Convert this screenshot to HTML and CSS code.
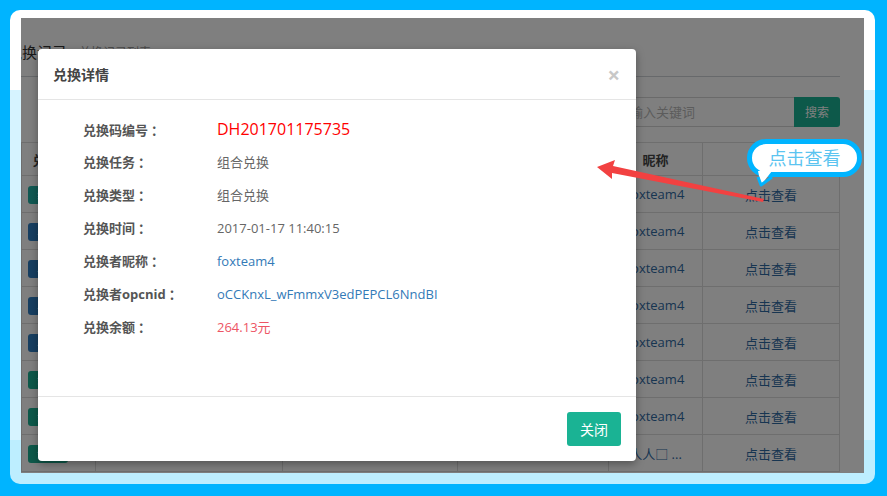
FILE: index.html
```html
<!DOCTYPE html>
<html lang="zh-CN">
<head>
<meta charset="utf-8">
<title>兑换详情</title>
<link rel="stylesheet" href="styles.css">
</head>
<body>
<div class="frame">
  <div class="page">
    <div class="content">
      <div class="title-row">
        <h2 class="title">兑换记录</h2>
        <span class="subtitle">兑换记录列表</span>
      </div>
      <div class="search-row">
        <input class="search-input" type="text" placeholder="请输入关键词">
        <button class="search-btn">搜索</button>
      </div>
      <table class="grid">
        <colgroup>
          <col class="c1"><col class="c2"><col class="c3"><col class="c4"><col class="c5"><col class="c6">
        </colgroup>
        <thead>
          <tr><th>兑换类型</th><th>兑换码编号</th><th>兑换任务</th><th>兑换时间</th><th>昵称</th><th>操作</th></tr>
        </thead>
        <tbody>
          <tr><td class="left"><span class="badge teal">组合</span></td><td>DH201701175735</td><td>组合兑换</td><td>2017-01-17</td><td class="link">foxteam4</td><td class="link">点击查看</td></tr>
          <tr><td class="left"><span class="badge blue">单项</span></td><td>DH201701175734</td><td>单项兑换</td><td>2017-01-17</td><td class="link">foxteam4</td><td class="link">点击查看</td></tr>
          <tr><td class="left"><span class="badge blue">单项</span></td><td>DH201701175733</td><td>单项兑换</td><td>2017-01-17</td><td class="link">foxteam4</td><td class="link">点击查看</td></tr>
          <tr><td class="left"><span class="badge blue">单项</span></td><td>DH201701175732</td><td>单项兑换</td><td>2017-01-17</td><td class="link">foxteam4</td><td class="link">点击查看</td></tr>
          <tr><td class="left"><span class="badge blue">单项</span></td><td>DH201701175731</td><td>单项兑换</td><td>2017-01-17</td><td class="link">foxteam4</td><td class="link">点击查看</td></tr>
          <tr><td class="left"><span class="badge green">余额</span></td><td>DH201701175730</td><td>余额兑换</td><td>2017-01-17</td><td class="link">foxteam4</td><td class="link">点击查看</td></tr>
          <tr><td class="left"><span class="badge green">余额</span></td><td>DH201701175729</td><td>余额兑换</td><td>2017-01-17</td><td class="link">foxteam4</td><td class="link">点击查看</td></tr>
          <tr><td class="left"><span class="badge green">余额</span></td><td>DH201701175728</td><td>余额兑换</td><td>2017-01-16</td><td class="link">人人□ ...</td><td class="link">点击查看</td></tr>
        </tbody>
      </table>
    </div>
    <div class="overlay"></div>
    <div class="modal">
      <div class="modal-header">
        <h4 class="modal-title">兑换详情</h4>
        <span class="close">×</span>
      </div>
      <div class="modal-body">
        <div class="row"><span class="label">兑换码编号<span class="colon">：</span></span><span class="value code">DH201701175735</span></div>
        <div class="row"><span class="label">兑换任务<span class="colon">：</span></span><span class="value">组合兑换</span></div>
        <div class="row"><span class="label">兑换类型<span class="colon">：</span></span><span class="value">组合兑换</span></div>
        <div class="row"><span class="label">兑换时间<span class="colon">：</span></span><span class="value">2017-01-17 11:40:15</span></div>
        <div class="row"><span class="label">兑换者昵称<span class="colon">：</span></span><span class="value blue-text">foxteam4</span></div>
        <div class="row"><span class="label">兑换者opcnid<span class="colon">：</span></span><span class="value blue-text">oCCKnxL_wFmmxV3edPEPCL6NndBI</span></div>
        <div class="row"><span class="label">兑换余额<span class="colon">：</span></span><span class="value money">264.13元</span></div>
      </div>
      <div class="modal-footer">
        <button class="btn-close">关闭</button>
      </div>
    </div>
  </div>
</div>
<div class="bubble">点击查看</div>
<svg class="bubble-tail" width="26" height="24" viewBox="0 0 26 24">
  <polygon points="6,4 20,4 9,18" fill="#ffffff"/>
  <polyline points="6,10 9,18 20,10" fill="none" stroke="#00b4ff" stroke-width="3" stroke-linejoin="round"/>
</svg>
<svg class="arrow" width="887" height="496" viewBox="0 0 887 496">
  <polygon points="597,167 615,160 613,166 764,199 763,202 612,173 612,179" fill="#f24141"/>
</svg>
</body>
</html>
```
FILE: styles.css
```css
* { box-sizing: border-box; }

html, body {
  margin: 0;
  padding: 0;
}

body {
  width: 887px;
  height: 496px;
  overflow: hidden;
  background: #00b4ff;
  font-family: "Open Sans", "Noto Sans CJK SC", sans-serif;
  position: relative;
}

.frame {
  margin: 10px 0 0 10px;
  width: 865px;
  height: 474px;
  padding: 8px 11px 11px 11px;
  border-radius: 10px;
  background: linear-gradient(to bottom, #ffffff 0, #ffffff 80px, #d6f3ff 80px, #d6f3ff 430px, #bdeeff 430px, #bdeeff 100%);
}

.page {
  position: relative;
  width: 843px;
  height: 455px;
  overflow: hidden;
  background: #ffffff;
}

.content {
  width: 819px;
  padding-top: 22px;
}

.title-row {
  display: flex;
  align-items: flex-start;
  gap: 12px;
  height: 37px;
  border-bottom: 1px solid #cfd3d6;
  margin-left: -14px;
}

.title {
  margin: 0;
  font-size: 15px;
  line-height: 24px;
  font-weight: normal;
  color: #333;
}

.subtitle {
  font-size: 12px;
  line-height: 26px;
  color: #999;
}

.search-row {
  display: flex;
  justify-content: flex-end;
  margin-top: 20px;
  height: 30px;
}

.search-input {
  width: 190px;
  height: 30px;
  border: 1px solid #d5d5d5;
  border-right: none;
  padding: 0 12px;
  font-family: inherit;
  font-size: 13px;
  color: #555;
  outline: none;
}

.search-input::placeholder { color: #b8b8b8; }

.search-btn {
  width: 46px;
  height: 30px;
  border: none;
  border-radius: 0 3px 3px 0;
  background: #1ab394;
  color: #ffffff;
  font-family: inherit;
  font-size: 12px;
  padding: 0;
}

.grid {
  margin-top: 15px;
  width: 818px;
  border-collapse: collapse;
  table-layout: fixed;
  font-size: 13px;
}

.c1 { width: 74px; }
.c2 { width: 187px; }
.c3 { width: 175px; }
.c4 { width: 151px; }
.c5 { width: 94px; }
.c6 { width: 137px; }

.grid th, .grid td {
  border: 1px solid #dddddd;
  text-align: center;
  padding: 0 6px;
  white-space: nowrap;
  overflow: hidden;
  color: #666;
}

.grid th {
  height: 33px;
  font-weight: bold;
  color: #444;
}

.grid td { height: 37px; }

.grid .left { text-align: left; }

.grid td.link { color: #2f6aa3; }

.badge {
  display: inline-block;
  width: 40px;
  height: 18px;
  line-height: 18px;
  border-radius: 3px;
  text-align: center;
  color: #ffffff;
  font-size: 11px;
  vertical-align: middle;
}

.badge.teal { background: #23b3a6; }
.badge.blue { background: #2f7ec2; }
.badge.green { background: #1ab394; }

.overlay {
  position: absolute;
  inset: 0;
  background: rgba(0, 0, 0, 0.5);
}

.modal {
  position: absolute;
  left: 17px;
  top: 31px;
  width: 598px;
  height: 412px;
  background: #ffffff;
  border-radius: 4px;
  box-shadow: 0 3px 9px rgba(0, 0, 0, 0.35);
  display: flex;
  flex-direction: column;
}

.modal-header {
  height: 51px;
  padding: 0 16px 0 15px;
  border-bottom: 1px solid #e5e5e5;
  display: flex;
  align-items: center;
  justify-content: space-between;
}

.modal-title {
  margin: 0;
  font-size: 14px;
  font-weight: bold;
  color: #444;
}

.close {
  font-size: 22px;
  line-height: 22px;
  font-weight: bold;
  color: #c8c8c8;
}

.modal-body {
  flex: 1;
  padding: 13px 0 0 45px;
}

.row {
  display: flex;
  align-items: center;
  height: 33px;
}

.row:first-child { height: 32px; }

.label {
  width: 134px;
  font-size: 13px;
  font-weight: bold;
  color: #555;
}

.colon {
  margin-left: 3px;
}

.value {
  font-size: 13px;
  color: #666;
}

.value.code {
  font-size: 16px;
  color: #ff0000;
}

.value.blue-text { color: #337ab7; }
.value.money { color: #ed5565; }

.modal-footer {
  border-top: 1px solid #e5e5e5;
  padding: 15px 15px 15px 0;
  display: flex;
  justify-content: flex-end;
}

.btn-close {
  width: 54px;
  height: 34px;
  border: none;
  border-radius: 3px;
  background: #1ab394;
  color: #ffffff;
  font-family: inherit;
  font-size: 14px;
  padding: 0;
}

.bubble {
  position: absolute;
  left: 747px;
  top: 139px;
  width: 115px;
  height: 38px;
  border: 5px solid #00b4ff;
  border-radius: 19px;
  background: #ffffff;
  color: #5bc4f0;
  font-size: 18px;
  line-height: 28px;
  text-align: center;
}

.bubble-tail {
  position: absolute;
  left: 752px;
  top: 167px;
}

.arrow {
  position: absolute;
  left: 0;
  top: 0;
  pointer-events: none;
}
```
